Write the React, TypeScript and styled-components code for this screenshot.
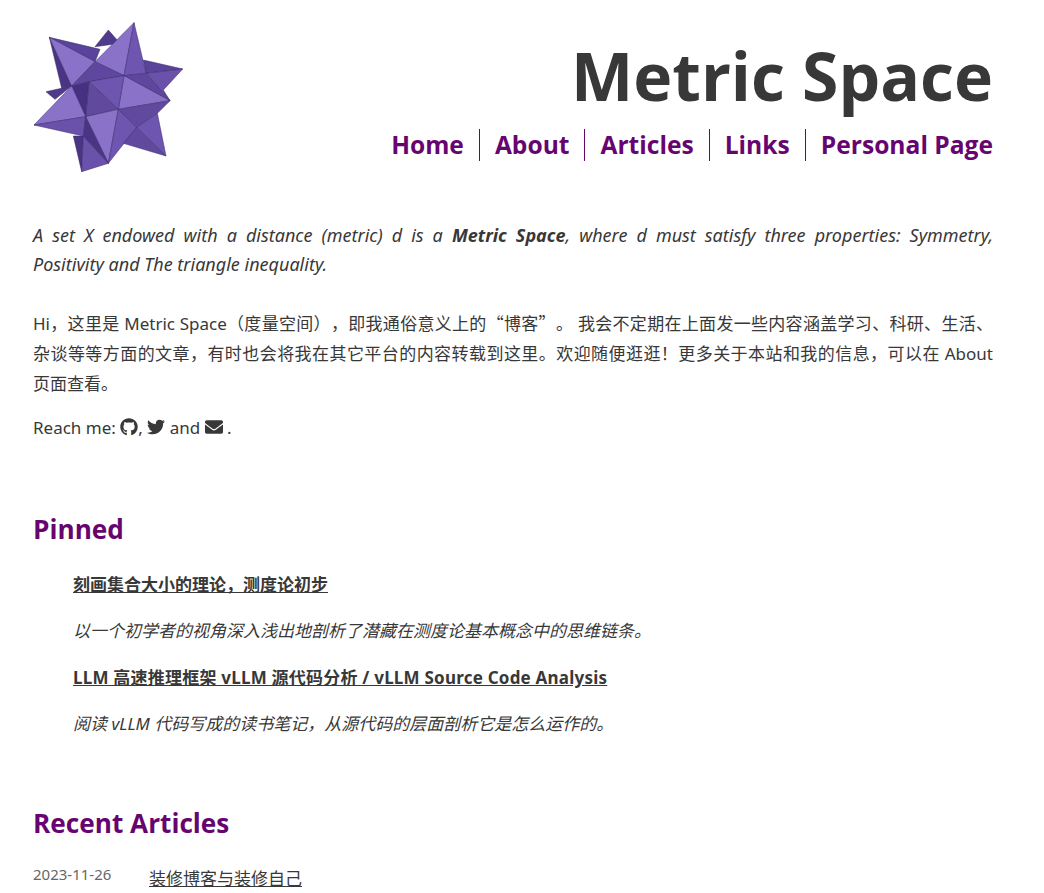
import React from "react";
import styled, { createGlobalStyle } from "styled-components";
import { FaGithub, FaTwitter, FaEnvelope } from "react-icons/fa";

const Global = createGlobalStyle`
  html, body { margin: 0; padding: 0; height: 893px; overflow: hidden; background: #fff; }
  body {
    font-family: "Noto Sans", "Noto Sans CJK SC", sans-serif;
    color: #383838;
    font-size: 17px;
    text-spacing-trim: space-all;
  }
`;
const Page = styled.div`
  padding: 0 51px 0 33px;
  height: 893px;
  overflow: hidden;
`;
const Header = styled.header`
  display: flex;
  justify-content: space-between;
  height: 173px;
  padding-top: 22px;
  box-sizing: border-box;
`;
const Logo = styled.svg`
  width: 150px;
  height: 150px;
  flex: none;
`;
const HeaderRight = styled.div`
  display: flex;
  flex-direction: column;
  align-items: flex-end;
`;
const SiteTitle = styled.h1`
  margin: 13px 0 0;
  font-family: "Open Sans", sans-serif;
  font-size: 66px;
  line-height: 80px;
  font-weight: 700;
  color: #383838;
`;
const Nav = styled.nav`
  display: flex;
  margin-top: 14px;
`;
const NavLink = styled.a<{ $first?: boolean; $last?: boolean }>`
  font-family: "Open Sans", sans-serif;
  font-size: 24.6px;
  line-height: 32px;
  font-weight: 700;
  color: #670570;
  padding: 0 ${p => (p.$last ? 0 : 15)}px 0 ${p => (p.$first ? 0 : 15)}px;
  border-left: ${p => (p.$first ? "none" : "1px solid #670570")};
`;
const Intro = styled.div`
  margin-top: 48px;
  font-size: 18px;
  font-style: italic;
  line-height: 29px;
`;
const IntroFirstLine = styled.span`
  display: block;
  text-align: justify;
  text-align-last: justify;
`;
const IntroLastLine = styled.span`
  display: block;
`;
const Para = styled.p<{ $top: number }>`
  margin: ${p => p.$top}px 0 0;
  text-align: justify;
  line-height: 30px;
`;
const CjkQuote = styled.span`
  font-family: "Noto Sans CJK SC", sans-serif;
`;
const NoWrap = styled.span`
  white-space: nowrap;
`;
const Icon = styled.span`
  font-size: 18px;
  vertical-align: -2px;
  display: inline-block;
  line-height: 18px;
  height: 18px;
`;
const SectionTitle = styled.h2<{ $top: number }>`
  margin: ${p => p.$top}px 0 0;
  font-family: "Open Sans", sans-serif;
  font-size: 26.2px;
  line-height: 36px;
  font-weight: 700;
  color: #670570;
`;
const PinnedList = styled.div`
  padding-left: 40px;
`;
const PinnedLink = styled.a<{ $top: number; $tracking?: number }>`
  display: block;
  margin-top: ${p => p.$top}px;
  font-weight: 700;
  line-height: 26px;
  letter-spacing: ${p => p.$tracking ?? 0}px;
  text-decoration: underline;
  color: #383838;
`;
const PinnedDesc = styled.p`
  margin: 20px 0 0;
  font-style: italic;
  line-height: 26px;
`;
const ArticleRow = styled.div`
  display: flex;
  margin-top: 23px;
`;
const ArticleDate = styled.time`
  width: 116px;
  font-size: 15px;
  line-height: 20px;
  color: #666;
`;
const ArticleLink = styled.a`
  line-height: 30px;
  text-decoration: underline;
`;

const faces: [string, string][] = [
  ["265,60 225,110 300,100", "#4f3a8c"],
  ["370,150 488,177 378,190", "#5a439b"],
  ["488,177 378,190 450,272 430,240", "#6a52ab"],
  ["78,245 155,228 105,268", "#4f3a8c"],
  ["160,378 190,378 185,485", "#4a3585"],
  ["190,378 265,460 185,485", "#6a52ab"],
  ["88,82 240,118 225,155", "#5a439b"],
  ["88,82 155,228 125,235", "#4a3585"],
  ["88,82 225,155 155,228", "#8a72c8"],
  ["342,38 225,155 312,197", "#8a72c8"],
  ["342,38 378,190 312,197", "#6e56b0"],
  ["225,155 312,197 207,215 155,228", "#5f479f"],
  ["312,197 378,190 450,272", "#5f479f"],
  ["312,197 450,272 295,298", "#8a72c8"],
  ["207,215 312,197 295,298", "#6e56b0"],
  ["207,215 295,298 197,320", "#614a9e"],
  ["155,228 207,215 197,320", "#453180"],
  ["155,228 197,320 42,345", "#8a72c8"],
  ["42,345 197,320 190,378", "#6a52ab"],
  ["197,320 295,298 265,460", "#8a72c8"],
  ["197,320 265,460 190,378", "#4a3585"],
  ["295,298 350,352 265,460", "#6e56b0"],
  ["295,298 450,272 412,310 350,352", "#614a9e"],
  ["412,310 438,438 350,352", "#6e56b0"],
  ["350,352 438,438 310,400", "#614a9e"],
];

const Star = () => (
  <Logo viewBox="39 36 450 450" aria-label="logo">
    {faces.map(([points, fill]) => (
      <polygon key={points} points={points} fill={fill} stroke="#3a2a6b" strokeWidth="1.6" strokeLinejoin="round" />
    ))}
  </Logo>
);

export default function App() {
  return (
    <Page>
      <Global />
      <Header>
        <Star />
        <HeaderRight>
          <SiteTitle>Metric Space</SiteTitle>
          <Nav>
            <NavLink $first>Home</NavLink>
            <NavLink>About</NavLink>
            <NavLink>Articles</NavLink>
            <NavLink>Links</NavLink>
            <NavLink $last>Personal Page</NavLink>
          </Nav>
        </HeaderRight>
      </Header>
      <Intro>
        <IntroFirstLine>A set X endowed with a distance (metric) d is a <b>Metric Space</b>, where d must satisfy three properties: Symmetry,</IntroFirstLine>
        <IntroLastLine>Positivity and The triangle inequality.</IntroLastLine>
      </Intro>
      <Para $top={29}>
        Hi，这里是 Metric Space（度量空间），即我通俗意义上的<CjkQuote>“博客”</CjkQuote>。 我会不定期在上面发一些内容涵盖学习、科研、生活、杂谈等等方面的文章，有时也会将我在其它平台的内容转载到这里。欢迎随便逛逛！更多关于本站和我的信息，可以在 About <NoWrap>页面查看。</NoWrap>
      </Para>
      <Para $top={14}>
        Reach me: <Icon><FaGithub /></Icon>, <Icon><FaTwitter /></Icon> and <Icon><FaEnvelope /></Icon> .
      </Para>
      <SectionTitle $top={68}>Pinned</SectionTitle>
      <PinnedList>
        <PinnedLink $top={25}>刻画集合大小的理论，测度论初步</PinnedLink>
        <PinnedDesc>以一个初学者的视角深入浅出地剖析了潜藏在测度论基本概念中的思维链条。</PinnedDesc>
        <PinnedLink $top={21} $tracking={0.22}>LLM 高速推理框架 vLLM 源代码分析 / vLLM Source Code Analysis</PinnedLink>
        <PinnedDesc>阅读 vLLM 代码写成的读书笔记，从源代码的层面剖析它是怎么运作的。</PinnedDesc>
      </PinnedList>
      <SectionTitle $top={68}>Recent Articles</SectionTitle>
      <ArticleRow>
        <ArticleDate>2023-11-26</ArticleDate>
        <ArticleLink>装修博客与装修自己</ArticleLink>
      </ArticleRow>
    </Page>
  );
}
